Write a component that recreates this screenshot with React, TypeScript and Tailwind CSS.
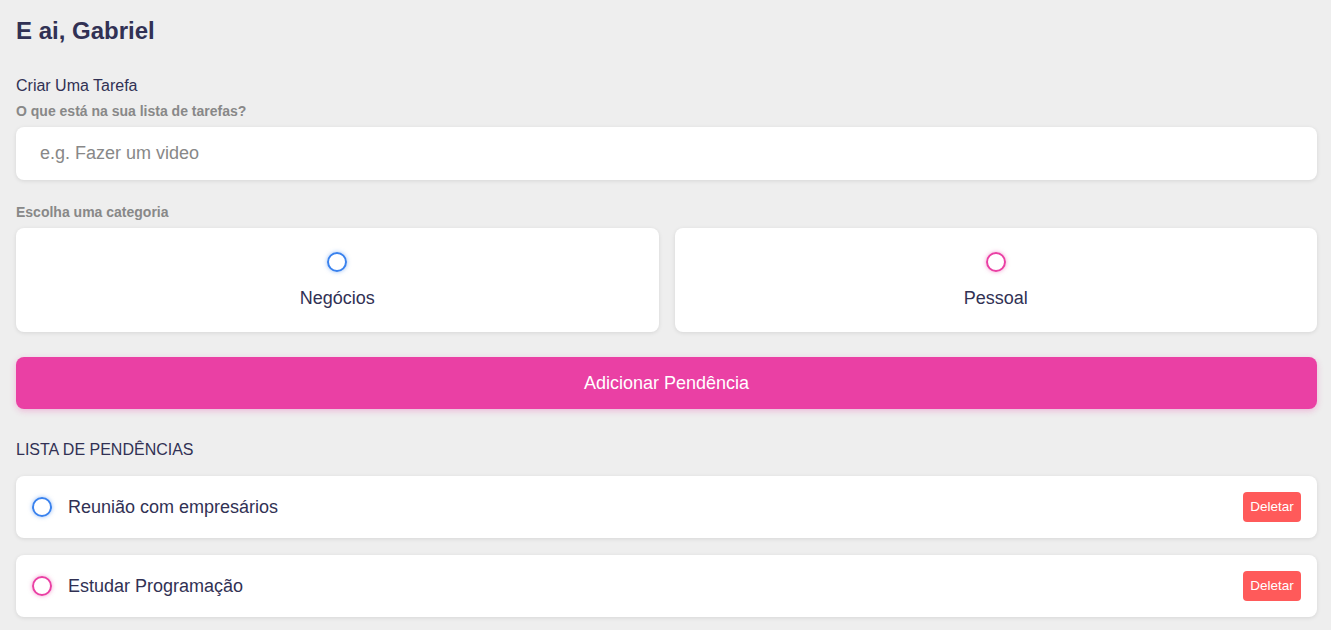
import { useState } from 'react';

const todos = [
  { id: 1, text: 'Reunião com empresários', category: 'business' },
  { id: 2, text: 'Estudar Programação', category: 'personal' },
];

function Bubble({ category }: { category: string }) {
  const cls =
    category === 'business'
      ? 'border-[#3a82ee] shadow-[0_0_4px_rgba(58,130,238,0.5)]'
      : 'border-[#ea40a4] shadow-[0_0_4px_rgba(234,64,164,0.5)]';
  return <span className={`block w-5 h-5 shrink-0 rounded-full border-2 ${cls}`} />;
}

export default function App() {
  const [items, setItems] = useState(todos);

  return (
    <main className="min-h-screen bg-[#eeeeee] pl-4 pr-[14px] pt-[17px] font-['Liberation_Sans',Arial,sans-serif] text-[#313154]">
      <h2 className="text-[24px] font-bold leading-[28px] text-[#313154]">E ai, Gabriel</h2>

      <section className="mt-[31px]">
        <h3 className="text-[16px] leading-[20px] text-[#313154]">Criar Uma Tarefa</h3>
        <h4 className="mt-[7px] text-[14px] font-bold leading-[16px] text-[#888888]">
          O que está na sua lista de tarefas?
        </h4>
        <input
          type="text"
          placeholder="e.g. Fazer um video"
          className="mt-[8px] block w-full h-[53px] rounded-lg bg-white px-6 text-[18px] text-[#313154] placeholder:text-[#888888] shadow-[0_1px_4px_rgba(0,0,0,0.1)] outline-none"
        />

        <h4 className="mt-[24px] text-[14px] font-bold leading-[16px] text-[#888888]">
          Escolha uma categoria
        </h4>
        <div className="mt-[8px] grid grid-cols-2 gap-4">
          <label className="flex h-[104px] flex-col items-center rounded-lg bg-white pt-[24px] shadow-[0_1px_4px_rgba(0,0,0,0.1)]">
            <Bubble category="business" />
            <span className="mt-[15px] text-[18px] leading-[22px]">Negócios</span>
          </label>
          <label className="flex h-[104px] flex-col items-center rounded-lg bg-white pt-[24px] shadow-[0_1px_4px_rgba(0,0,0,0.1)]">
            <Bubble category="personal" />
            <span className="mt-[15px] text-[18px] leading-[22px]">Pessoal</span>
          </label>
        </div>

        <button className="mt-[25px] block w-full h-[52px] rounded-lg bg-[#ea40a4] text-[18px] text-white shadow-[0_2px_6px_rgba(234,64,164,0.3)]">
          Adicionar Pendência
        </button>
      </section>

      <section className="mt-[31px]">
        <h3 className="text-[16px] leading-[20px] text-[#313154]">LISTA DE PENDÊNCIAS</h3>
        <div className="mt-[16px] flex flex-col gap-[17px]">
          {items.map((item) => (
            <div
              key={item.id}
              className="flex h-[62px] items-center rounded-lg bg-white pl-4 pr-4 shadow-[0_1px_4px_rgba(0,0,0,0.1)]"
            >
              <Bubble category={item.category} />
              <span className="ml-4 flex-1 text-[18px] leading-[22px]">{item.text}</span>
              <button
                onClick={() => setItems(items.filter((i) => i.id !== item.id))}
                className="h-[30px] w-[58px] rounded bg-[#ff5a5a] text-[13.5px] text-white"
              >
                Deletar
              </button>
            </div>
          ))}
        </div>
      </section>
    </main>
  );
}
